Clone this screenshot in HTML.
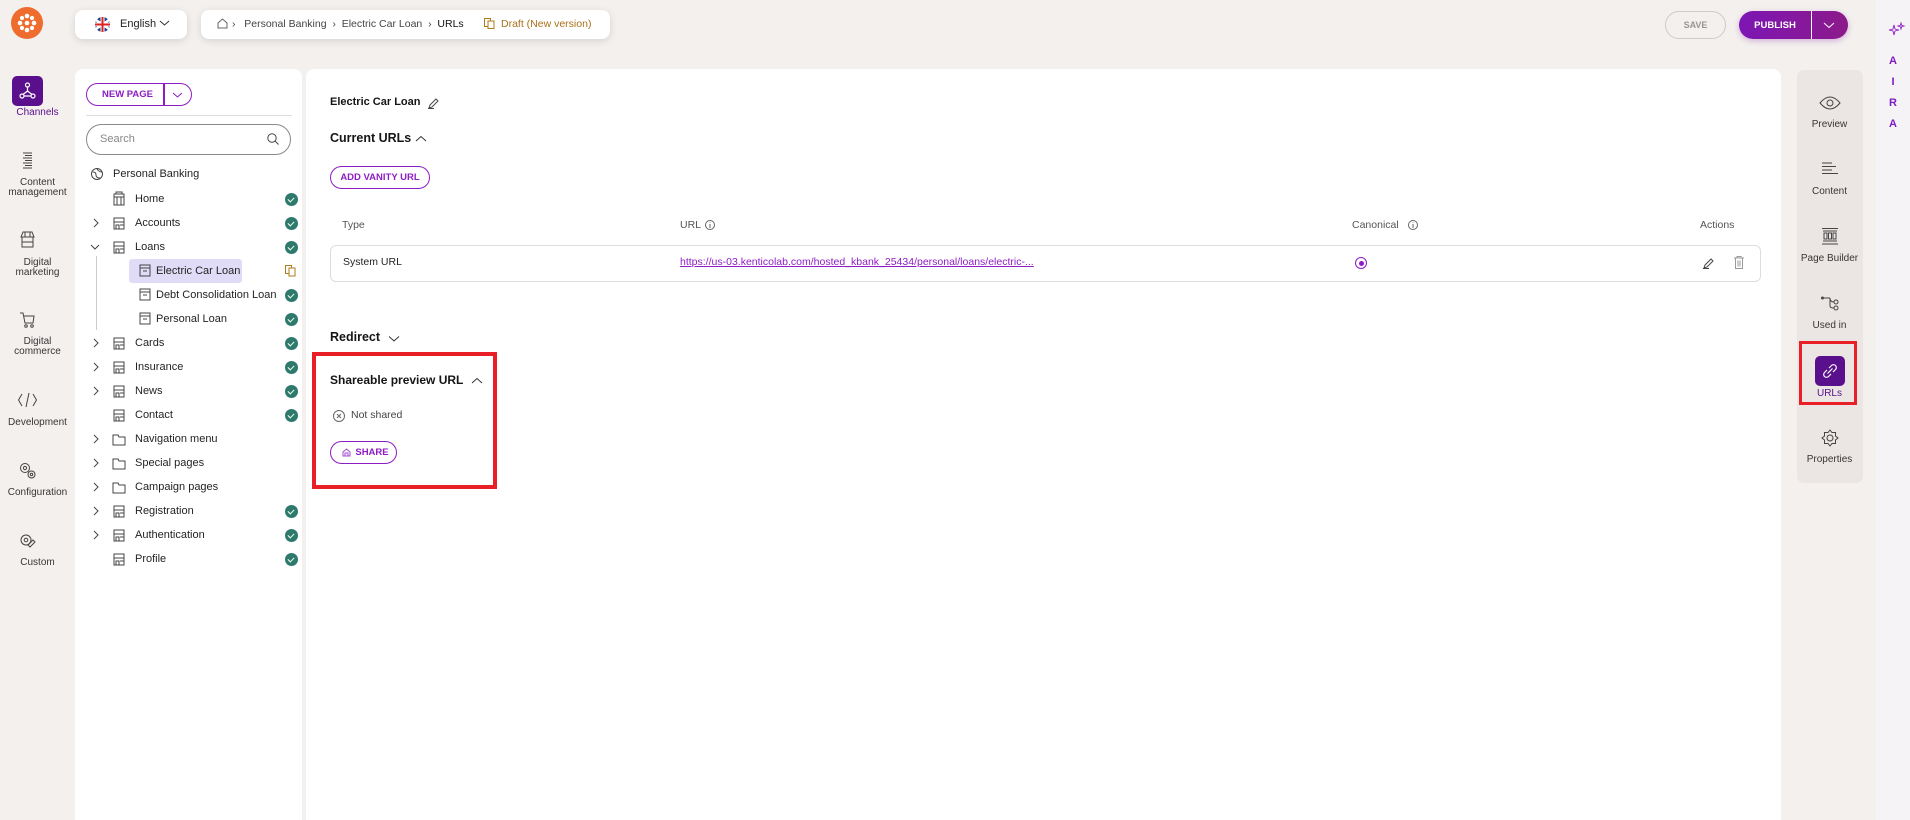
<!DOCTYPE html>
<html><head><meta charset="utf-8">
<style>
*{box-sizing:border-box;margin:0;padding:0}
body{width:1910px;height:820px;overflow:hidden;background:#f3f0ee;font-family:"Liberation Sans",sans-serif;color:#231f20;position:relative;font-size:11px}
.abs{position:absolute}
.pill{position:absolute;background:#fff;border-radius:8px;box-shadow:0 2px 8px rgba(0,0,0,.12)}
.nav{position:absolute;left:0;width:75px;text-align:center;font-size:10px;color:#3a3436;line-height:10px}
.tree{position:absolute;left:75px;top:69px;width:227px;height:751px;background:#fff;border-radius:8px 8px 0 0}
.content{position:absolute;left:306px;top:69px;width:1475px;height:751px;background:#fff;border-radius:8px 8px 0 0}
.ti{position:absolute;font-size:11px;color:#231f20;white-space:nowrap;line-height:14px}
.chk{position:absolute;left:210px;width:13px;height:13px;border-radius:50%;background:#2d7a6c}
.chk:after{content:"";position:absolute;left:4px;top:3px;width:3px;height:5px;border:solid #fff;border-width:0 1.5px 1.5px 0;transform:rotate(45deg)}
.btn{position:absolute;border:1.5px solid #8e1dc4;border-radius:12px;color:#8e1dc4;font-weight:bold;font-size:9.5px;display:flex;align-items:center;justify-content:center;background:#fff}
.h{position:absolute;font-weight:bold;color:#151515;white-space:nowrap}
.rp{position:absolute;left:1797px;width:65px;text-align:center;font-size:10px;color:#3a3436}
svg{position:absolute;overflow:visible}
</style></head><body>

<!-- logo -->
<div class="abs" style="left:11px;top:7px;width:32px;height:32px;border-radius:50%;background:#ef6c2f"></div>
<svg style="left:11px;top:7px" width="32" height="32" viewBox="0 0 32 32"><g fill="#fff"><circle cx="16" cy="9" r="2.3"/><circle cx="16" cy="23" r="2.3"/><circle cx="9" cy="16" r="2.3"/><circle cx="23" cy="16" r="2.3"/><circle cx="11" cy="11" r="2.1"/><circle cx="21" cy="11" r="2.1"/><circle cx="11" cy="21" r="2.1"/><circle cx="21" cy="21" r="2.1"/><circle cx="16" cy="16" r="2.3"/></g></svg>

<!-- language -->
<div class="pill" style="left:75px;top:10px;width:112px;height:29px"></div>
<svg style="left:95px;top:17px" width="15" height="15" viewBox="0 0 15 15"><circle cx="7.5" cy="7.5" r="7.5" fill="#27408b"/><path d="M1 3L14 12M14 3L1 12" stroke="#fff" stroke-width="2.5"/><path d="M7.5 0V15M0 7.5H15" stroke="#fff" stroke-width="4"/><path d="M7.5 0V15M0 7.5H15" stroke="#d22" stroke-width="2"/></svg>
<div class="abs" style="left:120px;top:18px;font-size:11px">English</div>
<svg style="left:160px;top:21px" width="9" height="5"><path d="M0 0L4.5 4L9 0" stroke="#333" fill="none"/></svg>

<!-- breadcrumb -->
<div class="pill" style="left:201px;top:10px;width:409px;height:29px"></div>
<svg style="left:217px;top:18px" width="11" height="11"><path d="M1 5L5.5 1L10 5V10H1Z" stroke="#666" fill="none"/></svg>
<div class="abs" style="left:232px;top:18px;font-size:10.5px;color:#444;white-space:nowrap">›&nbsp;&nbsp; Personal Banking &nbsp;›&nbsp; Electric Car Loan &nbsp;›&nbsp; <span style="color:#111">URLs</span></div>
<svg style="left:484px;top:18px" width="11" height="11"><rect x="0.5" y="0.5" width="6" height="8" stroke="#b07a1a" fill="none"/><rect x="4" y="3" width="6" height="7.5" stroke="#b07a1a" fill="#fff"/></svg>
<div class="abs" style="left:501px;top:18px;font-size:10.5px;color:#a8711a">Draft (New version)</div>

<!-- save/publish -->
<div class="abs" style="left:1665px;top:11px;width:61px;height:28px;border:1px solid #cfcaca;border-radius:14px;font-size:9px;font-weight:bold;color:#9a9595;display:flex;align-items:center;justify-content:center">SAVE</div>
<div class="abs" style="left:1739px;top:11px;width:109px;height:28px;border-radius:14px;background:linear-gradient(90deg,#7d16b4,#8c1a8a);box-shadow:0 2px 6px rgba(140,30,170,.3)"></div>
<div class="abs" style="left:1739px;top:11px;width:72px;height:28px;color:#fff;font-weight:bold;font-size:9.5px;display:flex;align-items:center;justify-content:center">PUBLISH</div>
<div class="abs" style="left:1811px;top:11px;width:1px;height:28px;background:#fff"></div>
<svg style="left:1824px;top:23px" width="10" height="5"><path d="M0 0L5 4.5L10 0" stroke="#fff" fill="none"/></svg>

<!-- left nav -->
<div class="abs" style="left:12px;top:76px;width:31px;height:30px;border-radius:5px;background:#5a0f8c"></div>
<svg style="left:12px;top:76px" width="31" height="30"><g stroke="#fff" fill="none" stroke-width="1.2"><circle cx="15.5" cy="9" r="2"/><circle cx="10" cy="20" r="2"/><circle cx="21" cy="20" r="2"/><path d="M15.5 11V15M15.5 15L11 18.5M15.5 15L20 18.5M12 20H19"/></g></svg>
<div class="nav" style="top:108px;color:#5a0f8c">Channels</div>
<svg style="left:21px;top:152px" width="13" height="17"><g stroke="#444"><path d="M2 1H11M4 3.5H11M2 6H11M4 8.5H11M2 11H11M4 13.5H11M2 16H11"/></g></svg>
<div class="nav" style="top:178px">Content<br>management</div>
<svg style="left:20px;top:231px" width="15" height="17"><g stroke="#444" fill="none"><path d="M1 6L3 1H12L14 6Z M2 6V16H13V6 M5 1V6M10 1V6M2 11H13"/></g></svg>
<div class="nav" style="top:258px">Digital<br>marketing</div>
<svg style="left:20px;top:312px" width="15" height="16"><g stroke="#444" fill="none"><path d="M0 1H3L5 11H13L14 4H4"/><circle cx="6" cy="14" r="1.3"/><circle cx="12" cy="14" r="1.3"/></g></svg>
<div class="nav" style="top:337px">Digital<br>commerce</div>
<svg style="left:18px;top:393px" width="19" height="14"><g stroke="#444" fill="none"><path d="M4 1L0.5 7L4 13M15 1L18.5 7L15 13M11 0L8 14"/></g></svg>
<div class="nav" style="top:418px">Development</div>
<svg style="left:19px;top:462px" width="17" height="17"><g stroke="#444" fill="none"><circle cx="6" cy="6" r="4.5"/><circle cx="6" cy="6" r="1.6"/><circle cx="12.5" cy="12.5" r="3.5"/><circle cx="12.5" cy="12.5" r="1.2"/></g></svg>
<div class="nav" style="top:488px">Configuration</div>
<svg style="left:19px;top:533px" width="17" height="17"><g stroke="#444" fill="none"><circle cx="7" cy="7" r="5"/><circle cx="7" cy="7" r="1.8"/><path d="M9 12L14 7L16 9L11 14Z"/></g></svg>
<div class="nav" style="top:558px">Custom</div>

<!-- tree panel -->
<div class="tree">
  <div class="btn" style="left:11px;top:14px;width:106px;height:23px;justify-content:flex-start;padding-left:15px">NEW PAGE</div>
  <div class="abs" style="left:88px;top:14px;width:1.5px;height:23px;background:#8e1dc4"></div>
  <svg style="left:98px;top:24px" width="9" height="5"><path d="M0 0L4.5 4L9 0" stroke="#8e1dc4" fill="none"/></svg>
  <div class="abs" style="left:11px;top:46px;width:206px;height:1px;background:#ddd"></div>
  <div class="abs" style="left:11px;top:55px;width:205px;height:31px;border:1.5px solid #8c8789;border-radius:16px"></div>
  <div class="abs" style="left:25px;top:64px;color:#888;font-size:11px">Search</div>
  <svg style="left:192px;top:64px" width="12" height="12"><circle cx="5" cy="5" r="4.2" stroke="#444" fill="none"/><path d="M8 8L11.5 11.5" stroke="#444"/></svg>
</div>
<svg style="left:91px;top:168px" width="12" height="12"><circle cx="6" cy="6" r="5.5" stroke="#444" fill="none"/><path d="M2 4Q5 4 5 7T9 10M6 1Q8 4 11 4" stroke="#444" fill="none"/></svg>
<div class="ti" style="left:113px;top:167px">Personal Banking</div>
<div class="ti" style="left:135px;top:192px">Home</div>
<div class="ti" style="left:135px;top:216px">Accounts</div>
<div class="ti" style="left:135px;top:240px">Loans</div>
<div class="abs" style="left:129px;top:259px;width:113px;height:24px;border-radius:3px;background:#e0dbf7"></div>
<div class="ti" style="left:156px;top:264px">Electric Car Loan</div>
<div class="ti" style="left:156px;top:288px">Debt Consolidation Loan</div>
<div class="ti" style="left:156px;top:312px">Personal Loan</div>
<div class="ti" style="left:135px;top:336px">Cards</div>
<div class="ti" style="left:135px;top:360px">Insurance</div>
<div class="ti" style="left:135px;top:384px">News</div>
<div class="ti" style="left:135px;top:408px">Contact</div>
<div class="ti" style="left:135px;top:432px">Navigation menu</div>
<div class="ti" style="left:135px;top:456px">Special pages</div>
<div class="ti" style="left:135px;top:480px">Campaign pages</div>
<div class="ti" style="left:135px;top:504px">Registration</div>
<div class="ti" style="left:135px;top:528px">Authentication</div>
<div class="ti" style="left:135px;top:552px">Profile</div>
<div class="abs" style="left:96px;top:256px;width:1px;height:74px;background:#ccc"></div>
<svg style="left:0;top:0" width="302" height="600">
<g stroke="#444" fill="none" stroke-width="1">
<path d="M94 219L98 223L94 227M94 339L98 343L94 347M94 363L98 367L94 371M94 387L98 391L94 395M94 435L98 439L94 443M94 459L98 463L94 467M94 483L98 487L94 491M94 507L98 511L94 515M94 531L98 535L94 539"/>
<path d="M91 245L95 249L99 245"/>
<path d="M114 194H124V205H114ZM114 197H124M116 194V192H122V194M117 197V205M121 197V205"/>
<path d="M114 218H124V229H114ZM114 222H124M116 225H119V229H116ZM120 225H124"/>
<path d="M114 242H124V253H114ZM114 246H124M116 249H119V253H116ZM120 249H124"/>
<path d="M140 265H150V276H140ZM140 268H150M143 271H147"/>
<path d="M140 289H150V300H140ZM140 292H150M143 295H147"/>
<path d="M140 313H150V324H140ZM140 316H150M143 319H147"/>
<path d="M114 338H124V349H114ZM114 342H124M116 345H119V349H116ZM120 345H124"/>
<path d="M114 362H124V373H114ZM114 366H124M116 369H119V373H116ZM120 369H124"/>
<path d="M114 386H124V397H114ZM114 390H124M116 393H119V397H116ZM120 393H124"/>
<path d="M114 410H124V421H114ZM114 414H124M116 417H119V421H116ZM120 417H124"/>
<path d="M113 435H118L119 437H125V445H113Z"/>
<path d="M113 459H118L119 461H125V469H113Z"/>
<path d="M113 483H118L119 485H125V493H113Z"/>
<path d="M114 506H124V517H114ZM114 510H124M116 513H119V517H116ZM120 513H124"/>
<path d="M114 530H124V541H114ZM114 534H124M116 537H119V541H116ZM120 537H124"/>
<path d="M114 554H124V565H114ZM114 558H124M116 561H119V565H116ZM120 561H124"/>
</g>
<g stroke="#b07a1a" fill="none"><rect x="285.5" y="265.5" width="6" height="8"/><rect x="289" y="268" width="6" height="8" fill="#fff"/></g>
</svg>
<div class="chk" style="top:193px;left:285px"></div>
<div class="chk" style="top:217px;left:285px"></div>
<div class="chk" style="top:241px;left:285px"></div>
<div class="chk" style="top:289px;left:285px"></div>
<div class="chk" style="top:313px;left:285px"></div>
<div class="chk" style="top:337px;left:285px"></div>
<div class="chk" style="top:361px;left:285px"></div>
<div class="chk" style="top:385px;left:285px"></div>
<div class="chk" style="top:409px;left:285px"></div>
<div class="chk" style="top:505px;left:285px"></div>
<div class="chk" style="top:529px;left:285px"></div>
<div class="chk" style="top:553px;left:285px"></div>

<!-- content -->
<div class="content"></div>
<div class="h" style="left:330px;top:96px;font-size:11px">Electric Car Loan</div>
<svg style="left:428px;top:97px" width="12" height="12"><path d="M1 11L2 8L8 2L10 4L4 10Z M0 11.5H6" stroke="#444" fill="none"/></svg>
<div class="h" style="left:330px;top:131px;font-size:12.5px">Current URLs</div>
<svg style="left:416px;top:136px" width="10" height="6"><path d="M0 5L5 0.5L10 5" stroke="#333" fill="none"/></svg>
<div class="btn" style="left:330px;top:166px;width:100px;height:23px">ADD VANITY URL</div>
<div class="abs" style="left:342px;top:219px;color:#555;font-size:10.5px">Type</div>
<div class="abs" style="left:680px;top:219px;color:#555;font-size:10.5px">URL</div>
<svg style="left:705px;top:220px" width="10" height="10"><circle cx="5" cy="5" r="4.5" stroke="#666" fill="none"/><path d="M5 4V8M5 2.5V3" stroke="#666"/></svg>
<div class="abs" style="left:1352px;top:219px;color:#555;font-size:10.5px">Canonical</div>
<svg style="left:1408px;top:220px" width="10" height="10"><circle cx="5" cy="5" r="4.5" stroke="#666" fill="none"/><path d="M5 4V8M5 2.5V3" stroke="#666"/></svg>
<div class="abs" style="left:1700px;top:219px;color:#555;font-size:10.5px">Actions</div>
<div class="abs" style="left:330px;top:245px;width:1431px;height:37px;border:1px solid #ddd;border-radius:6px"></div>
<div class="abs" style="left:343px;top:256px;font-size:10.5px">System URL</div>
<div class="abs" style="left:680px;top:256px;font-size:10.5px;color:#8e1dc4;text-decoration:underline">https://us-03.kenticolab.com/hosted_kbank_25434/personal/loans/electric-...</div>
<div class="abs" style="left:1355px;top:257px;width:12px;height:12px;border:1.5px solid #8e1dc4;border-radius:50%"></div>
<div class="abs" style="left:1358.5px;top:260.5px;width:5px;height:5px;background:#8e1dc4;border-radius:50%"></div>
<svg style="left:1703px;top:257px" width="12" height="12"><path d="M1 11L2 8L8 2L10 4L4 10Z M0 11.5H6" stroke="#444" fill="none"/></svg>
<svg style="left:1734px;top:256px" width="10" height="13"><path d="M0 2H10M3 2V0.5H7V2M1.5 2V12.5H8.5V2M4 4.5V10.5M6 4.5V10.5" stroke="#999" fill="none"/></svg>
<div class="h" style="left:330px;top:330px;font-size:12.5px">Redirect</div>
<svg style="left:389px;top:336px" width="10" height="6"><path d="M0 0.5L5 5L10 0.5" stroke="#333" fill="none"/></svg>
<div class="abs" style="left:312px;top:352px;width:185px;height:137px;border:4px solid #e81f27"></div>
<div class="h" style="left:330px;top:373px;font-size:12px">Shareable preview URL</div>
<svg style="left:472px;top:378px" width="10" height="6"><path d="M0 5L5 0.5L10 5" stroke="#333" fill="none"/></svg>
<svg style="left:333px;top:410px" width="12" height="12"><circle cx="6" cy="6" r="5.5" stroke="#666" fill="none"/><path d="M4 4L8 8M8 4L4 8" stroke="#666"/></svg>
<div class="abs" style="left:351px;top:409px;font-size:10.5px;color:#444">Not shared</div>
<div class="btn" style="left:330px;top:441px;width:67px;height:23px;padding-left:4px">
<svg style="position:static;margin-right:4px" width="9" height="9"><path d="M1 8V4L4.5 1L8 4V8ZM3 8V5H6V8" stroke="#a04fd0" fill="none"/></svg>SHARE</div>

<!-- right panel -->
<div class="abs" style="left:1797px;top:70px;width:66px;height:413px;border-radius:7px;background:#ebe5e3"></div>
<svg style="left:1819px;top:96px" width="22" height="14"><path d="M1 7Q11 -5 21 7Q11 19 1 7Z" stroke="#444" fill="none"/><circle cx="11" cy="7" r="3" stroke="#444" fill="none"/></svg>
<div class="rp" style="top:119px">Preview</div>
<svg style="left:1822px;top:162px" width="16" height="14"><path d="M0 1H10M0 4.5H14M0 8H10M0 11.5H16" stroke="#444"/></svg>
<div class="rp" style="top:186px">Content</div>
<svg style="left:1822px;top:228px" width="16" height="17"><path d="M0 0.5H16M0 16H16M1 3H15M1 13H15M2 5H5V11H2ZM6.5 5H9.5V11H6.5ZM11 5H14V11H11Z" stroke="#444" fill="none"/></svg>
<div class="rp" style="top:253px">Page Builder</div>
<svg style="left:1821px;top:296px" width="18" height="14"><circle cx="1.5" cy="2" r="1.5" fill="#444"/><path d="M3 2H9M9 2Q9 6 13 6M9 2V10Q9 12 13 12" stroke="#444" fill="none"/><circle cx="15" cy="6" r="2" stroke="#444" fill="none"/><circle cx="15" cy="12" r="2" stroke="#444" fill="none"/></svg>
<div class="rp" style="top:320px">Used in</div>
<div class="abs" style="left:1799px;top:341px;width:58px;height:64px;border:3.5px solid #e81f27"></div>
<div class="abs" style="left:1815px;top:356px;width:30px;height:30px;border-radius:5px;background:#5a0f8c"></div>
<svg style="left:1822px;top:363px" width="16" height="16"><path d="M7 5L9.5 2.5A2.6 2.6 0 0 1 13.5 6.5L11 9M9 11L6.5 13.5A2.6 2.6 0 0 1 2.5 9.5L5 7M5.5 10.5L10.5 5.5" stroke="#fff" fill="none" stroke-width="1.2"/></svg>
<div class="rp" style="top:388px;color:#5a0f8c">URLs</div>
<svg style="left:1821px;top:429px" width="18" height="18"><circle cx="9" cy="9" r="3" stroke="#444" fill="none"/><path d="M9 1L11 3.5L14.5 3.5L14.5 7L17 9L14.5 11L14.5 14.5L11 14.5L9 17L7 14.5L3.5 14.5L3.5 11L1 9L3.5 7L3.5 3.5L7 3.5Z" stroke="#444" fill="none"/></svg>
<div class="rp" style="top:454px">Properties</div>

<!-- AIRA -->
<div class="abs" style="left:1876px;top:0;width:34px;height:820px;background:#f5f3f6"></div>
<svg style="left:1889px;top:23px" width="16" height="14"><path d="M5 2L6 6L10 7L6 8L5 12L4 8L0 7L4 6Z M12 0L12.7 2.3L15 3L12.7 3.7L12 6L11.3 3.7L9 3L11.3 2.3Z" stroke="#8e1dc4" fill="none" stroke-width="0.9"/></svg>
<div class="abs" style="left:1876px;top:51px;width:34px;text-align:center;color:#7d1cc0;font-size:11px;line-height:21px;font-weight:bold">A<br>I<br>R<br>A</div>
</body></html>
